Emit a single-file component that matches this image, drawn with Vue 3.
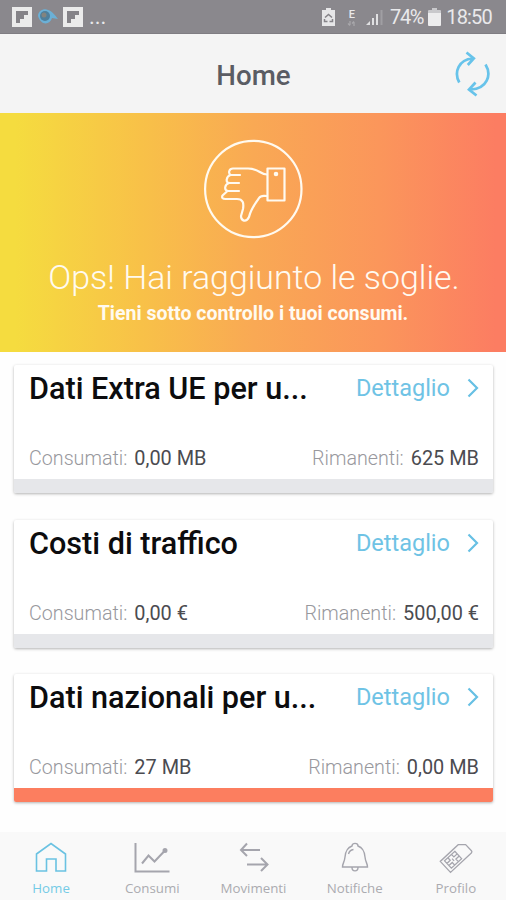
<template>
  <div class="app">
    <div class="status-bar">
      <div class="status-left">
        <svg width="84" height="20" viewBox="0 0 84 20">
          <rect x="0" y="0" width="20" height="20" fill="#ebebeb" />
          <path d="M4 4h12v4h-4v4h-4v4h-4z" fill="#858388" />
          <path d="M26 9c0-5 6-8 10-6 4 1 7 5 10 9l-6-1c-2 7-11 8-14-2z" fill="#6bb0d6" />
          <circle cx="33" cy="9" r="5" fill="#4f7f9b" />
          <circle cx="32" cy="8" r="2.500" fill="#82847f" />
          <rect x="51" y="0" width="20" height="20" fill="#ebebeb" />
          <path d="M55 4h12v4h-4v4h-4v4h-4z" fill="#858388" />
        </svg>
        <span class="dots">...</span>
      </div>
      <div class="status-right">
        <svg class="saver" width="13" height="18" viewBox="0 0 13 18">
          <path d="M4 0h5v2h4v16H0V2h4z" fill="#e6e6e8" />
          <path d="M3 9.500l3.500-3 3.500 3M2.500 11v2.500h3M10.500 11v2.500h-3" fill="none" stroke="#858388" stroke-width="1.500" />
        </svg>
        <div class="network">
          <span>E</span>
          <svg width="10" height="5" viewBox="0 0 10 5">
            <path d="M3 0v4M1 2.500l2 2M7 5V1M5 2.500l2-2" stroke="#a9a8ac" stroke-width="1.200" />
          </svg>
        </div>
        <svg class="signal" width="17" height="18" viewBox="0 0 17 18">
          <path d="M0 17l4-4v4zM6 10h2v7H6zM10 6h2v11h-2z" fill="#e0e0e2" />
          <path d="M14.500 2h2v15h-2z" fill="#a09fa3" />
        </svg>
        <span class="percent">74%</span>
        <svg class="battery" width="13" height="18" viewBox="0 0 13 18">
          <path d="M4 0h5v2h3q1 0 1 1v2H0V3q0-1 1-1h3z" fill="#c9c9cc" />
          <path d="M0 5h13v12q0 1-1 1H1q-1 0-1-1z" fill="#ededee" />
        </svg>
        <span class="clock">18:50</span>
      </div>
    </div>

    <header class="header">
      <h1>Home</h1>
      <svg class="refresh" width="38" height="46" viewBox="0 0 38 46" fill="none" stroke="#67c3ea" stroke-width="2.700">
        <path d="M5.300 31.500C-.5 21 5 8.500 18.500 7.500M12.500 1.500l7.300 6-6 6.500" />
        <path d="M31.500 13.500C38 24 33 37.500 17 38.500M21.500 31.500l-6.500 7 7.500 6" />
      </svg>
    </header>

    <section class="hero">
      <svg class="thumb" width="100" height="100" viewBox="0 0 100 100" fill="none" stroke="#fffaf0" stroke-width="2.200" stroke-linejoin="round" stroke-linecap="round">
        <circle cx="50.300" cy="50" r="48.200" />
        <path d="M64 35.500C57 35.500 56 29.500 45 29.500H30C26 29.500 25 34 27.500 36H37M27.500 36C23 37.500 22.500 43.500 26 44H36M26 44C21.500 45.500 21 51 24.500 52H36M24.500 52L19.500 56.500Q18 60 22.500 60H34C40 60 41 64 40 70L38 77C38 82 43 84 46 78C48 69 53 64 56 59C58 56 60 57 64 57" />
        <path d="M64.500 29.500h17v32h-17z" />
        <circle cx="73" cy="35" r="1.200" />
      </svg>
      <h2>Ops! Hai raggiunto le soglie.</h2>
      <p>Tieni sotto controllo i tuoi consumi.</p>
    </section>

    <main class="cards">
      <article v-for="card in cards" :key="card.title" class="card">
        <div class="card-top">
          <h3>{{ card.title }}</h3>
          <a class="detail">
            <span>Dettaglio</span>
            <svg width="12" height="20" viewBox="0 0 12 20" fill="none" stroke="#67c0e4" stroke-width="2.200">
              <path d="M1.500 1.500L10 10l-8.500 8.500" />
            </svg>
          </a>
        </div>
        <div class="card-values">
          <div><span class="label">Consumati:</span>{{ card.used }}</div>
          <div><span class="label">Rimanenti:</span>{{ card.left }}</div>
        </div>
        <div class="bar" :class="{ full: card.full }"></div>
      </article>
    </main>

    <nav class="tabs">
      <a class="tab active">
        <svg width="40" height="34" viewBox="0 0 40 34">
          <path d="M5.500 13L20 2.500l14.500 10.500v17H25v-12h-9.500v12h-10z" />
        </svg>
        <span>Home</span>
      </a>
      <a class="tab">
        <svg width="40" height="34" viewBox="0 0 40 34" stroke-width="2">
          <path d="M3.500 2v28.500h34M10 22.500l6.500-8 6 6L33 9.500" />
          <circle cx="33" cy="9.500" r="1.500" fill="#a5a5ad" />
        </svg>
        <span>Consumi</span>
      </a>
      <a class="tab">
        <svg width="40" height="34" viewBox="0 0 40 34" stroke-width="2">
          <path d="M27 9H8M14 2.500L8 9l6 6M14 23.500h20M28 17l6.500 6.500L28 30" />
        </svg>
        <span>Movimenti</span>
      </a>
      <a class="tab">
        <svg width="40" height="34" viewBox="0 0 40 34" stroke-width="1.400">
          <path d="M17 5C17 1.500 23 1.500 23 5C28.500 7 29.500 11 30 16C30.500 21 32.500 22.500 32.500 26H7.500C7.500 22.500 9.500 21 10 16C10.500 11 11.500 7 17 5zM17 26.500C17 31 23 31 23 26.500M13.500 13q1-4 5-4.500" />
        </svg>
        <span>Notifiche</span>
      </a>
      <a class="tab">
        <svg width="40" height="34" viewBox="0 0 40 34" stroke-width="1.300">
          <g transform="translate(20 16) rotate(47)">
            <path d="M-7.500 -10L-2.500 -15.500H6Q7.500 -15.500 7.500 -14V14.500H-7.500zM-5 -3h10v14H-5zM-5 1.500h3.500v-4.500M5 1.500H1.500v-4.500M-5 6.500h3.500v4.500M5 6.500H1.500v4.500M-1.500 4h3" />
          </g>
        </svg>
        <span>Profilo</span>
      </a>
    </nav>
  </div>
</template>

<script setup>
const cards = [
  { title: 'Dati Extra UE per u...', used: '0,00 MB', left: '625 MB', full: false },
  { title: 'Costi di traffico', used: '0,00 €', left: '500,00 €', full: false },
  { title: 'Dati nazionali per u...', used: '27 MB', left: '0,00 MB', full: true },
]
</script>

<style>
body {
  margin: 0;
  background: #fefefe;
}
</style>

<style scoped>
.app {
  width: 506px;
  height: 900px;
  overflow: hidden;
  display: flex;
  flex-direction: column;
  font-family: Roboto, "Liberation Sans", sans-serif;
}

h1,
h2,
h3,
p {
  margin: 0;
}

svg {
  flex: none;
}

.status-bar {
  box-sizing: border-box;
  height: 34px;
  padding: 1px 14px 0 12px;
  display: flex;
  justify-content: space-between;
  align-items: center;
  background: #8a888d;
  border-bottom: 1px solid #7f7d82;
  color: #e9e9eb;
}

.status-left,
.status-right {
  display: flex;
  align-items: center;
}

.dots {
  margin-left: -7px;
  font-size: 22px;
  line-height: 26px;
}

.network {
  display: flex;
  flex-direction: column;
  align-items: center;
  width: 10px;
  margin: 0 9px 0 12px;
  font-size: 11px;
  font-weight: 500;
  line-height: 12px;
}

.percent {
  margin: 0 5px 0 7px;
  font-size: 20px;
  letter-spacing: -1.3px;
}

.clock {
  margin-left: 5px;
  font-size: 20px;
  letter-spacing: -0.8px;
}

.header {
  height: 79px;
  display: grid;
  grid-template-columns: 1fr auto 1fr;
  align-items: center;
  background: #f4f4f4;
}

.header h1 {
  grid-column: 2;
  padding: 4px 0 0 1px;
  font-size: 27.7px;
  font-weight: 500;
  color: #5a5c63;
}

.refresh {
  justify-self: end;
  margin-right: 14px;
}

.hero {
  height: 239px;
  display: flex;
  flex-direction: column;
  align-items: center;
  background: linear-gradient(90deg, #f5dc3f 3%, #f8c148 28%, #f9a954 50%, #fb965b 75%, #fc7d62 98%);
  color: #fffaf0;
}

.thumb {
  margin-top: 26px;
}

.hero h2 {
  margin-top: 19px;
  padding-left: 2px;
  font-size: 33.9px;
  font-weight: 300;
  line-height: 40px;
  white-space: nowrap;
}

.hero p {
  margin-top: 4px;
  font-size: 19.5px;
  font-weight: 700;
  line-height: 24px;
}

.cards {
  flex: 1;
  display: flex;
  flex-direction: column;
  gap: 26.7px;
  padding: 13px 13px 0 14px;
}

.card {
  height: 128px;
  display: flex;
  flex-direction: column;
  background: #fff;
  border-radius: 2px;
  box-shadow: 0 1px 3px rgba(0, 0, 0, 0.3);
  overflow: hidden;
}

.card-top {
  display: flex;
  justify-content: space-between;
  align-items: center;
  height: 46px;
  padding: 0 14px 0 15px;
}

.card h3 {
  padding-top: 2px;
  font-size: 30.6px;
  font-weight: 500;
  line-height: 36px;
  color: #0c0c0e;
}

.detail {
  display: flex;
  align-items: center;
  gap: 17px;
  font-size: 23.5px;
  color: #6fc3e5;
}

.card-values {
  flex: 1;
  display: flex;
  justify-content: space-between;
  align-items: flex-end;
  padding: 0 14px 8px 15px;
  font-size: 19.9px;
  line-height: 24px;
  color: #4b4b50;
}

.label {
  margin-right: 7px;
  font-size: 19.7px;
  font-weight: 300;
  color: #98989d;
}

.bar {
  height: 14px;
  background: #e6e7ea;
}

.bar.full {
  background: #fc7e5f;
}

.tabs {
  height: 68px;
  display: grid;
  grid-template-columns: repeat(5, 1fr);
  background: #f9f9f9;
}

.tab {
  display: flex;
  flex-direction: column;
  align-items: center;
  padding: 9px 0 0 1px;
  font-family: "Open Sans", "Noto Sans", sans-serif;
  font-size: 13.3px;
  line-height: 18px;
  color: #ababb0;
}

.tab svg {
  fill: none;
  stroke: #a5a5ad;
  margin-bottom: 4px;
}

.tab.active {
  color: #74cbe6;
}

.tab.active svg {
  stroke: #6ac2e2;
  stroke-width: 1.6;
}
</style>
